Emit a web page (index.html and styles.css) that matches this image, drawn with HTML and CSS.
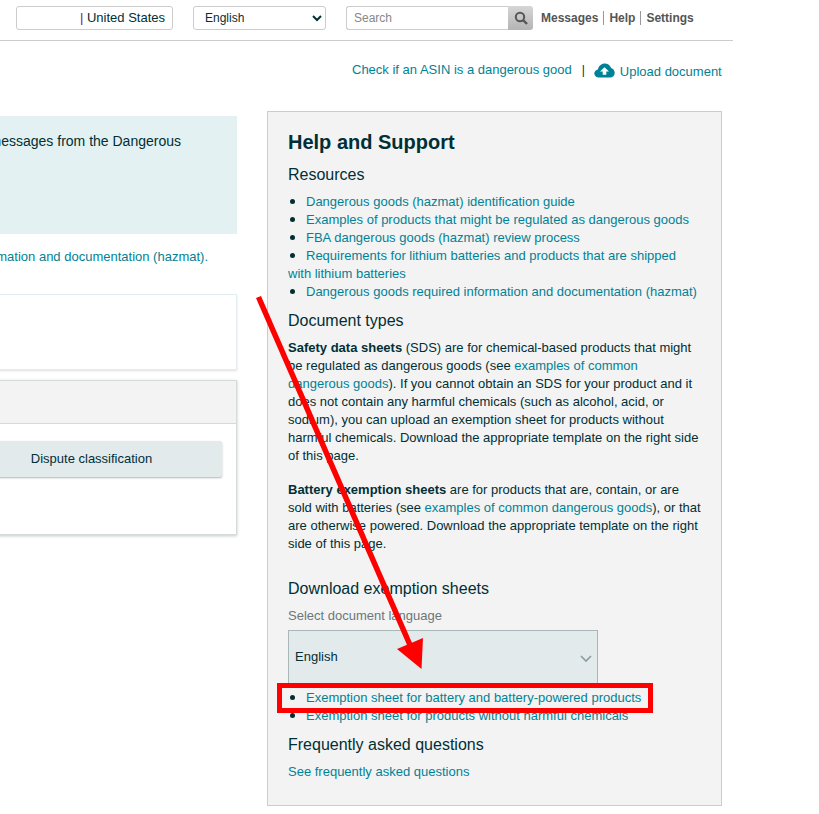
FILE: index.html
```html
<!DOCTYPE html>
<html lang="en">
<head>
<meta charset="utf-8">
<title>Dangerous goods</title>
<link rel="stylesheet" href="styles.css">
</head>
<body>
<div class="page">
  <header class="topbar">
    <div class="market"><span class="pipe">|</span> United States</div>
    <select class="lang"><option>English</option></select>
    <div class="search">
      <input class="search-input" placeholder="Search">
      <span class="search-btn">
        <svg width="14" height="14" viewBox="0 0 14 14"><circle cx="6" cy="6" r="4.2" fill="none" stroke="#555" stroke-width="2"/><path d="M9 9l4 4" stroke="#555" stroke-width="2.4"/></svg>
      </span>
    </div>
    <nav class="toplinks"><a>Messages</a><a>Help</a><a>Settings</a></nav>
  </header>

  <div class="actions">
    <a class="check">Check if an ASIN is a dangerous good</a>
    <span class="sep">|</span>
    <svg class="cloud" width="21" height="15" viewBox="0 0 21 16" preserveAspectRatio="none"><path fill="#008296" d="M5 15.500C2.200 15.500.3 13.600.3 11.200c0-2.200 1.500-3.900 3.600-4.300C4.600 3.200 7.400.5 10.800.5c3 0 5.500 2 6.300 4.900 2.100.6 3.600 2.800 3.600 5.200 0 2.800-2 4.900-4.700 4.900z"/><path fill="#fff" d="M10.500 4.500l4.500 4.500h-2.700v3.500H8.700V9H6z"/></svg>
    <a class="upload">Upload document</a>
  </div>

  <main class="content">
    <section class="left">
      <div class="notice">messages from the Dangerous</div>
      <p class="req-line"><span class="dark-link">information and documentation (hazmat).</span></p>
      <div class="card-plain"></div>
      <div class="card">
        <div class="card-head"></div>
        <div class="card-body"><button class="dispute">Dispute classification</button></div>
      </div>
    </section>

    <aside class="help">
      <h1>Help and Support</h1>
      <h2 class="h-res">Resources</h2>
      <ul>
        <li><a>Dangerous goods (hazmat) identification guide</a></li>
        <li><a>Examples of products that might be regulated as dangerous goods</a></li>
        <li><a>FBA dangerous goods (hazmat) review process</a></li>
        <li><a>Requirements for lithium batteries and products that are shipped with lithium batteries</a></li>
        <li><a>Dangerous goods required information and documentation (hazmat)</a></li>
      </ul>
      <h2 class="h-doc">Document types</h2>
      <p class="para"><b>Safety data sheets</b> (SDS) are for chemical-based products that might be regulated as dangerous goods (see <a>examples of common dangerous goods</a>). If you cannot obtain an SDS for your product and it does not contain any harmful chemicals (such as alcohol, acid, or sodium), you can upload an exemption sheet for products without harmful chemicals. Download the appropriate template on the right side of this page.</p>
      <p class="para para-b"><b>Battery exemption sheets</b> are for products that are, contain, or are sold with batteries (see <a>examples of common dangerous goods</a>), or that are otherwise powered. Download the appropriate template on the right side of this page.</p>
      <h2 class="h-dl">Download exemption sheets</h2>
      <div class="select-label">Select document language</div>
      <div class="doc-select">
        <span class="doc-value">English</span>
        <svg width="12" height="8" viewBox="0 0 12 8"><path d="M1 1l5 5 5-5" fill="none" stroke="#8c9c9f" stroke-width="1.600"/></svg>
      </div>
      <ul class="dl-list">
        <li><a>Exemption sheet for battery and battery-powered products</a></li>
        <li><a>Exemption sheet for products without harmful chemicals</a></li>
      </ul>
      <h2 class="h-faq">Frequently asked questions</h2>
      <a class="faq">See frequently asked questions</a>
    </aside>
  </main>

  <svg class="annotation" width="819" height="814" viewBox="0 0 819 814">
    <path d="M258.500 297L410 645" stroke="#fe0000" stroke-width="5.500" fill="none"/>
    <path d="M397 649L423 638L421.500 669Z" fill="#fe0000"/>
    <rect x="279.500" y="685.500" width="371" height="25" fill="none" stroke="#fe0000" stroke-width="5"/>
  </svg>
</div>
</body>
</html>
```
FILE: styles.css
```css
* { box-sizing: border-box; }
html, body { margin: 0; padding: 0; background: #fff; overflow: hidden; }
body { font-family: "Liberation Sans", Arial, sans-serif; font-size: 13px; line-height: 18px; color: #002f36; }
.page { position: relative; width: 819px; height: 814px; overflow: hidden; }
a { color: #008296; }

.topbar { width: 733px; height: 41px; border-bottom: 1px solid #ccc; display: flex; align-items: flex-start; padding: 6px 0 0 16px; }
.market { width: 157px; height: 24px; border: 1px solid #ccc; border-radius: 3px; text-align: right; padding: 2px 7px 0 0; font-size: 13px; color: #002f36; }
.pipe { color: #7b0f87; }
.lang { width: 133px; height: 24px; margin-left: 20px; border: 1px solid #ccc; border-radius: 3px; background: #fff; font: 12px "Liberation Sans", Arial, sans-serif; color: #002f36; padding-left: 7px; }
.search { display: flex; margin-left: 20px; width: 187px; height: 24px; }
.search-input { flex: 1; min-width: 0; border: 1px solid #ccc; border-right: 0; border-radius: 3px 0 0 3px; padding: 0 7px; font: 12px "Liberation Sans", Arial, sans-serif; }
.search-input::placeholder { color: #888; }
.search-btn { width: 25px; display: flex; align-items: center; justify-content: center; border-radius: 0 3px 3px 0; background: linear-gradient(#d6d6d6, #b4b4b4); }
.toplinks { display: flex; margin-left: 8px; margin-top: 5px; font-size: 12px; line-height: 14px; font-weight: 700; }
.toplinks a { color: #555; padding: 0 5px; border-left: 1px solid #999; }
.toplinks a:first-child { border-left: 0; padding-left: 0; }

.actions { height: 70px; display: flex; align-items: flex-start; padding: 20px 0 0 352px; }
.sep { margin-left: 10px; font-size: 12px; color: #002f36; }
.cloud { margin: 2px 0 0 9px; }
.upload { margin: 2px 0 0 5px; }

.content { display: flex; align-items: flex-start; margin-left: -163px; }
.left { width: 400px; padding-top: 5px; }
.notice { height: 118px; background: #e3f1f2; padding: 16px 56px 0 0; text-align: right; white-space: nowrap; font-size: 14px; }
.req-line { margin: 14px 0 0; height: 18px; text-align: right; padding-right: 29px; white-space: nowrap; }
.dark-link { color: #008296; }
.card-plain { height: 76px; margin-top: 28px; background: #fff; border: 1px solid #e1edee; box-shadow: 0 1px 2px rgba(0,0,0,.12); }
.card { height: 155px; margin-top: 10px; background: #fff; border: 1px solid #d5dbdb; box-shadow: 0 1px 3px rgba(0,0,0,.22); }
.card-head { height: 43px; background: #f3f3f3; border-bottom: 1px solid #d5dbdb; }
.card-body { padding: 17px 14px 0 123px; }
.dispute { display: block; width: 261px; height: 36px; padding-bottom: 2px; border: 0; border-radius: 2px; background: #e3eaeb; box-shadow: 0 1px 2px rgba(0,0,0,.3); color: #002f36; font: 13px "Liberation Sans", Arial, sans-serif; }

.help { width: 455px; height: 695px; margin: 0 0 0 30px; background: #f3f3f3; border: 1px solid #ccc; padding: 17px 19px 0 20px; }
h1 { margin: 0; font-size: 20px; line-height: 26px; font-weight: 700; color: #002f36; }
h2 { margin: 0; font-size: 16px; line-height: 20px; font-weight: 400; color: #002f36; }
.h-res { margin-top: 10px; }
ul { list-style: none; margin: 8px 0 0; padding: 0; }
li::before { content: ""; display: inline-block; width: 5px; height: 5px; margin: 0 11px 2px 2px; border-radius: 50%; background: #002f36; }
.h-doc { margin-top: 10px; }
.para { margin: 8px 0 0; }
.para-b { margin-top: 16px; }
.h-dl { margin-top: 26px; }
.select-label { margin-top: 8px; color: #6c7778; }
.doc-select { width: 310px; height: 55px; margin-top: 5px; display: flex; align-items: center; justify-content: space-between; padding: 0 5px 0 6px; background: #e3eaeb; border: 1px solid #a9b7b8; }
.doc-value { margin-bottom: 2px; }
.doc-select svg { margin-top: 3px; }
.dl-list { margin-top: 4px; }
.h-faq { margin-top: 10px; }
.faq { display: block; margin-top: 8px; }

.annotation { position: absolute; left: 0; top: 0; pointer-events: none; }
```
